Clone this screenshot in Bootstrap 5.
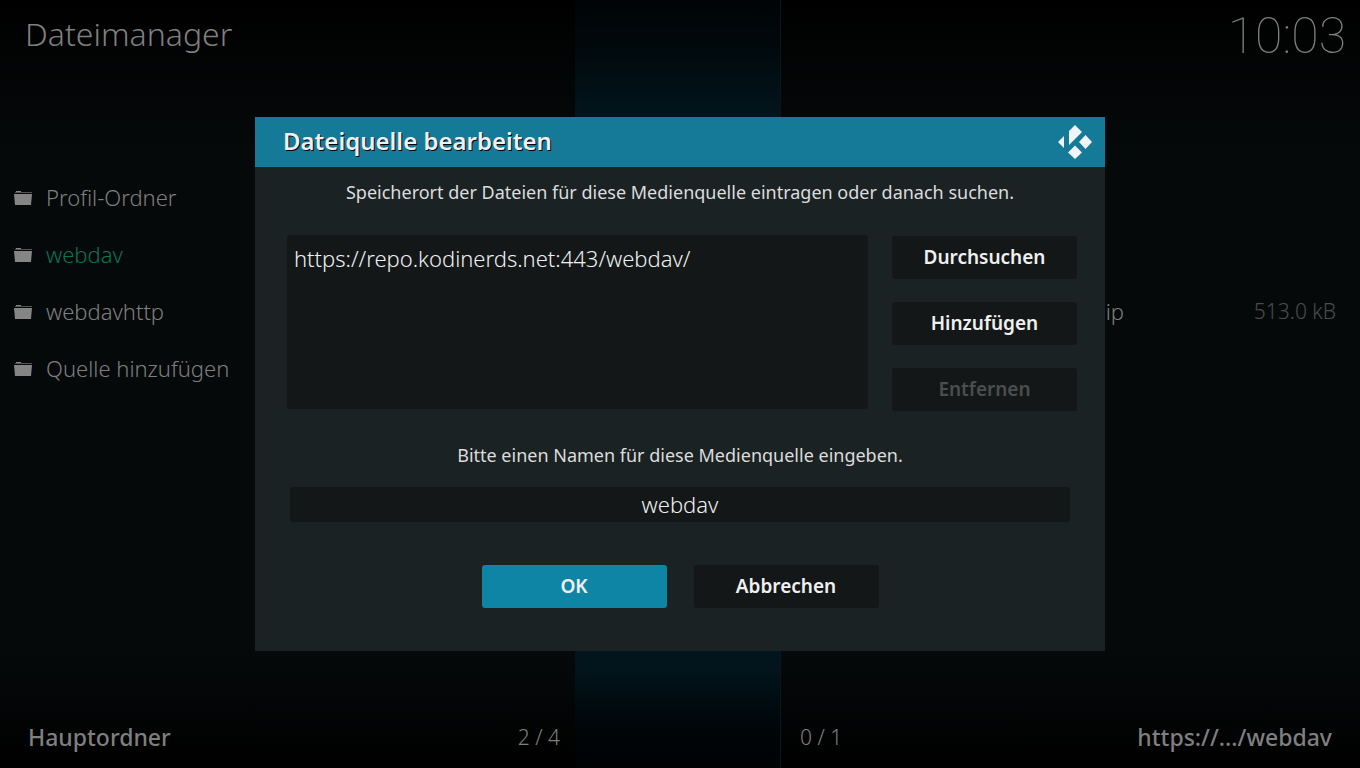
<!DOCTYPE html>
<html lang="de" data-bs-theme="dark">
<head>
<meta charset="utf-8">
<meta name="viewport" content="width=device-width, initial-scale=1">
<title>Dateimanager</title>
<link href="https://cdn.jsdelivr.net/npm/bootstrap@5.3.0/dist/css/bootstrap.min.css" rel="stylesheet">
<style>
body { font-family: "Noto Sans", sans-serif; font-size: 22px; line-height: 30px; background: #000; color: #7f7f7f; }
.fm-screen { background: linear-gradient(#000, #06090a 20%, #06090a 85%, #000); }
.fm-strip { left: 50%; width: 206px; margin-left: -105px; background: linear-gradient(#000304, #01090d 6%, #02171f 17%, #02141c 87%, #000508 95%, #000203); border-right: 1px solid #04191f; }
.fm-top { padding: 6px 14px 0 25px; }
.fm-title { font-size: 32px; font-weight: 300; line-height: 44px; color: #7f7f7f; margin-top: 6px; }
.fm-clock { font-family: Roboto, sans-serif; font-size: 50px; font-weight: 100; line-height: 60px; }
.fm-panes { display: grid; grid-template-columns: 1fr 240px 1fr; }
.fm-list { margin-top: 103px; font-weight: 300; }
.fm-row { height: 57px; padding-left: 14px; gap: 14px; color: inherit; }
.fm-row span { line-height: 30px; padding-bottom: 1px; }
.fm-current { color: #097352; }
.fm-size { width: 198px; font-size: 21px; color: #4c4c4c; }
.fm-foot { height: 62px; }
.fm-foot strong { font-size: 23px; font-weight: 500; }
.fm-foot span { font-size: 21px; font-weight: 300; }
.fm-dialog { max-width: 850px; width: 100%; background: #1b2224; color: #f0f0f0; padding-bottom: 43px; }
.fm-head { height: 50px; background: #157a97; padding: 0 13px 0 28px; }
.fm-head h2 { font-size: 24px; font-weight: 600; line-height: 32px; color: #f0f0f0; padding-bottom: 2px; text-shadow: 1px 1px 0 #000; }
.fm-hint { font-size: 18px; font-weight: 400; line-height: 26px; color: #dcdcdc; }
.fm-hint-first { margin-top: 12px; }
.fm-source { margin: 30px 28px 0 32px; }
.fm-field, .fm-field:focus { background: #131718; border: 0; border-radius: 3px; color: #f0f0f0; font-size: 22px; font-weight: 300; box-shadow: none; }
.fm-paths { height: 174px; resize: none; padding: 7px; }
.fm-side { gap: 23px; padding-top: 1px; }
.fm-namelabel { margin-top: 31px; }
.fm-name { margin: 19px 35px 0; }
.fm-name .fm-field { height: 35px; padding: 0 0 2px; }
.fm-actions { gap: 27px; margin-top: 43px; }
.fm-btn { --bs-btn-color: #f0f0f0; --bs-btn-bg: #131718; --bs-btn-hover-bg: #0f85a5; --bs-btn-hover-color: #f0f0f0; --bs-btn-disabled-bg: #131718; --bs-btn-disabled-color: #4b4e4f; --bs-btn-disabled-opacity: 1; --bs-btn-padding-y: 0; --bs-btn-border-width: 0; --bs-btn-border-radius: 3px; --bs-btn-font-size: 19px; --bs-btn-font-weight: 600; width: 185px; height: 43px; }
.fm-ok { --bs-btn-bg: #0f85a5; }
</style>
</head>
<body>
<div class="fm-screen position-relative vh-100 overflow-hidden">
  <div class="fm-strip position-absolute top-0 bottom-0"></div>
  <div class="position-relative h-100 d-flex flex-column">
    <header class="fm-top d-flex justify-content-between">
      <h1 class="fm-title">Dateimanager</h1>
      <time class="fm-clock">10:03</time>
    </header>
    <main class="fm-panes flex-grow-1">
      <nav class="fm-list">
        <a href="#" class="fm-row d-flex align-items-center text-decoration-none"><svg width="18" height="14" viewBox="0 0 18 14" aria-hidden="true"><path fill="#555" d="M1 1h17v1H1z"/><path fill="#858585" d="M2 0h5v1H2zM0 3h18l-1 11H1z"/></svg><span>Profil-Ordner</span></a>
        <a href="#" class="fm-row fm-current d-flex align-items-center text-decoration-none"><svg width="18" height="14" viewBox="0 0 18 14" aria-hidden="true"><path fill="#555" d="M1 1h17v1H1z"/><path fill="#858585" d="M2 0h5v1H2zM0 3h18l-1 11H1z"/></svg><span>webdav</span></a>
        <a href="#" class="fm-row d-flex align-items-center text-decoration-none"><svg width="18" height="14" viewBox="0 0 18 14" aria-hidden="true"><path fill="#555" d="M1 1h17v1H1z"/><path fill="#858585" d="M2 0h5v1H2zM0 3h18l-1 11H1z"/></svg><span>webdavhttp</span></a>
        <a href="#" class="fm-row d-flex align-items-center text-decoration-none"><svg width="18" height="14" viewBox="0 0 18 14" aria-hidden="true"><path fill="#555" d="M1 1h17v1H1z"/><path fill="#858585" d="M2 0h5v1H2zM0 3h18l-1 11H1z"/></svg><span>Quelle hinzufügen</span></a>
      </nav>
      <div></div>
      <nav class="fm-list">
        <div class="fm-row"></div>
        <div class="fm-row"></div>
        <a href="#" class="fm-row d-flex align-items-center justify-content-end text-decoration-none pe-4"><span>ip</span><span class="fm-size text-end">513.0 kB</span></a>
      </nav>
    </main>
    <footer class="fm-foot fm-panes align-items-center">
      <div class="d-flex justify-content-between"><strong class="ms-4 ps-1">Hauptordner</strong><span>2 / 4</span></div>
      <div></div>
      <div class="d-flex justify-content-between"><span>0 / 1</span><strong class="me-4 pe-1">https://.../webdav</strong></div>
    </footer>
  </div>
  <div class="position-absolute top-0 start-0 w-100 h-100 d-flex align-items-center justify-content-center">
    <form class="fm-dialog" role="dialog" aria-labelledby="dlg-title">
      <div class="fm-head d-flex align-items-center justify-content-between">
        <h2 id="dlg-title" class="mb-0">Dateiquelle bearbeiten</h2>
        <svg width="34" height="34" viewBox="0 0 34 34" fill="#eff5f9" aria-hidden="true"><path d="M17 0L24 7L11 20V6zM6 11V23L0 17zM27.500 10L34 17L27.500 24L21 17zM17 20.500L24 27.500L17 34L10 27.500z"/></svg>
      </div>
      <label for="paths" class="fm-hint fm-hint-first d-block text-center">Speicherort der Dateien für diese Medienquelle eintragen oder danach suchen.</label>
      <div class="fm-source d-flex gap-4">
        <textarea id="paths" class="fm-field fm-paths form-control" spellcheck="false">https://repo.kodinerds.net:443/webdav/</textarea>
        <div class="fm-side d-flex flex-column">
          <button type="button" class="btn fm-btn">Durchsuchen</button>
          <button type="button" class="btn fm-btn">Hinzufügen</button>
          <button type="button" class="btn fm-btn" disabled>Entfernen</button>
        </div>
      </div>
      <label for="name" class="fm-hint fm-namelabel d-block text-center">Bitte einen Namen für diese Medienquelle eingeben.</label>
      <div class="fm-name"><input id="name" class="fm-field form-control text-center" type="text" value="webdav"></div>
      <div class="fm-actions d-flex justify-content-center">
        <button type="submit" class="btn fm-btn fm-ok">OK</button>
        <button type="button" class="btn fm-btn">Abbrechen</button>
      </div>
    </form>
  </div>
</div>
<script src="https://cdn.jsdelivr.net/npm/bootstrap@5.3.0/dist/js/bootstrap.bundle.min.js"></script>
</body>
</html>
